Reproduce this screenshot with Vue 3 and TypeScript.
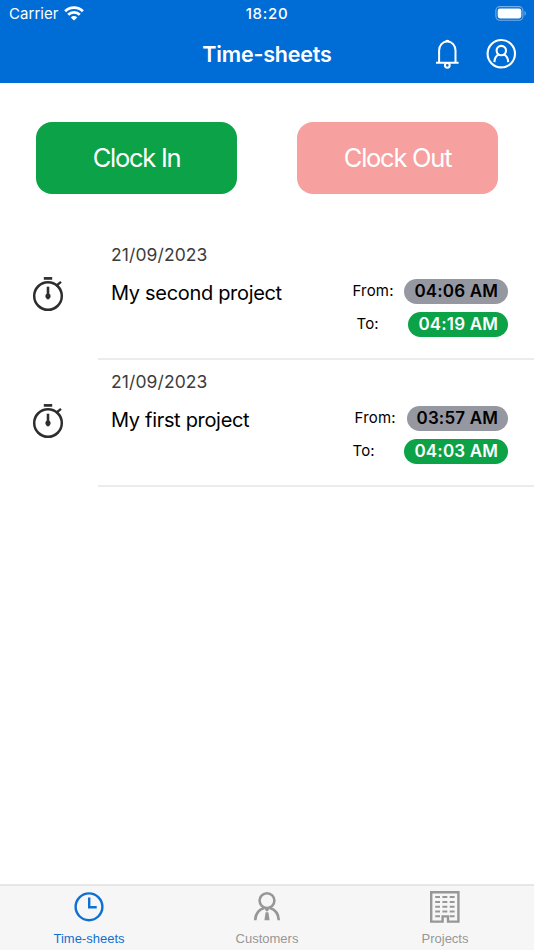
<script setup lang="ts">
interface Entry {
  id: number
  date: string
  project: string
  from: string
  to: string
}

const entries: Entry[] = [
  { id: 2, date: '21/09/2023', project: 'My second project', from: '04:06 AM', to: '04:19 AM' },
  { id: 1, date: '21/09/2023', project: 'My first project', from: '03:57 AM', to: '04:03 AM' },
]

const windowRows = [7.1, 11.9, 16.7, 21.5]
</script>

<template>
  <div class="screen">
    <header class="header">
      <div class="status">
        <div class="carrier">
          <span class="carrier-name">Carrier</span>
          <svg class="wifi" width="20" height="15" viewBox="0 0 20 15">
            <g fill="none" stroke="#fff" stroke-width="2.7">
              <path d="M1.1 5.3a12.6 12.6 0 0 1 17.8 0" />
              <path d="M4.2 8.7a8.2 8.2 0 0 1 11.6 0" />
            </g>
            <path d="M10 14.6 6.8 11.4a4.5 4.5 0 0 1 6.4 0Z" fill="#fff" />
          </svg>
        </div>
        <span class="time">18:20</span>
        <svg class="battery" width="32" height="15" viewBox="0 0 32 15">
          <rect x=".9" y=".6" width="27" height="13.6" rx="4" fill="none" stroke="#73aee9" stroke-width="1.1" />
          <rect x="2.7" y="2.4" width="23.6" height="10" rx="2.3" fill="#fff" />
          <path d="M29.5 5v4.8c1.8-.7 1.8-4.1 0-4.8Z" fill="#73aee9" />
        </svg>
      </div>
      <div class="navbar">
        <h1 class="title">Time-sheets</h1>
        <div class="actions">
          <svg width="24" height="32" viewBox="0 0 24 32" fill="none" stroke="#fff" stroke-width="2">
            <path d="M0 24.7h22.6M3.1 24.5V12.6C3.1 7.2 6.6 3.6 11.3 3.6s8.2 3.6 8.2 9V24.5" />
            <path d="M8.6 3.8a2.8 2.8 0 0 1 5.4 0Z" fill="#fff" stroke="none" />
            <circle cx="11.3" cy="27.3" r="2.4" />
          </svg>
          <svg width="32" height="32" viewBox="0 0 32 32" fill="none" stroke="#fff" stroke-width="2.1">
            <circle cx="16.3" cy="15.7" r="13.7" />
            <circle cx="16.3" cy="12.6" r="4.7" />
            <path d="M9.4 24.1c.1-4.1 1.9-6.7 4.7-8M23.2 24.1c-.1-4.1-1.9-6.7-4.7-8" />
          </svg>
        </div>
      </div>
    </header>

    <main class="content">
      <div class="buttons">
        <button class="clock-button clock-in"><span>Clock In</span></button>
        <button class="clock-button clock-out"><span>Clock Out</span></button>
      </div>

      <div v-for="entry in entries" :key="entry.id" class="entry">
        <svg class="stopwatch" width="34" height="38" viewBox="0 0 34 38" fill="none" stroke="#2e2e2e">
          <circle cx="16" cy="22" r="13.8" stroke-width="2.5" />
          <path d="M11.8 4.4h8.4" stroke-width="2.7" />
          <path d="m24 12 5-4.2" stroke-width="2.3" />
          <path d="M16 12.7v12.6" stroke-width="2.6" />
          <circle cx="16" cy="22" r="2.6" fill="#2e2e2e" stroke="none" />
        </svg>
        <div class="entry-body">
          <div class="summary">
            <div class="date">{{ entry.date }}</div>
            <div class="project">{{ entry.project }}</div>
          </div>
          <div class="times">
            <div class="time-row">
              <span class="label">From:</span>
              <span class="pill pill-from">{{ entry.from }}</span>
            </div>
            <div class="time-row">
              <span class="label">To:</span>
              <span class="pill pill-to">{{ entry.to }}</span>
            </div>
          </div>
        </div>
      </div>
    </main>

    <nav class="tabs">
      <div class="tab active">
        <svg width="34" height="34" viewBox="0 0 34 34" fill="none" stroke="currentColor" stroke-width="2.4">
          <circle cx="17" cy="16.8" r="13.4" />
          <path d="M17.2 7.5v9.7h7.5" />
        </svg>
        <span>Time-sheets</span>
      </div>
      <div class="tab">
        <svg width="34" height="34" viewBox="0 0 34 34" fill="none" stroke="currentColor" stroke-width="2.6">
          <circle cx="17" cy="10.6" r="7.4" />
          <path d="M5.2 30.2c.2-6 3.6-10.6 8.9-12.3M28.8 30.2c-.2-6-3.6-10.6-8.9-12.3" />
          <path d="M14.2 17.8h5.6L18 21.2h-2ZM15.6 22.3h2.8l1.2 7.9h-5.2Z" fill="currentColor" stroke="none" />
        </svg>
        <span>Customers</span>
      </div>
      <div class="tab">
        <svg width="34" height="34" viewBox="0 0 34 34" fill="none" stroke="currentColor" stroke-width="2.4">
          <path d="M3.2 2.2h27.2v29.4H20v-5.2h-5.4v5.2H3.2Z" />
          <path
            v-for="y in windowRows"
            :key="y"
            :d="`M7.2 ${y}h4.8m2.4 0h4.9m2.4 0h4.9`"
            stroke-width="2"
          />
          <path d="M7.2 26.3h4.8m9.7 0h4.9" stroke-width="2" />
        </svg>
        <span>Projects</span>
      </div>
    </nav>
  </div>
</template>

<style>
body {
  margin: 0;
  background: #fff;
}
</style>

<style scoped>
.screen {
  width: 534px;
  height: 950px;
  display: flex;
  flex-direction: column;
  overflow: hidden;
  background: #fff;
  font-family: Inter, "Liberation Sans", sans-serif;
  color: #000;
}
.header {
  height: 83px;
  flex: none;
  background: #006cd6;
  color: #fff;
}
.status {
  height: 27px;
  display: grid;
  grid-template-columns: 1fr auto 1fr;
  align-items: center;
  padding: 0 7px 0 9px;
  font-size: 15px;
}
.carrier {
  display: flex;
  align-items: center;
  gap: 5px;
}
.carrier-name {
  letter-spacing: 0.05px;
}
.time {
  margin-right: 2px;
  font-weight: 500;
  letter-spacing: 0.7px;
}
.battery {
  justify-self: end;
}
.navbar {
  height: 54px;
  display: grid;
  grid-template-columns: 1fr auto 1fr;
  align-items: center;
}
.title {
  grid-column: 2;
  margin: 0;
  font-size: 21.5px;
  font-weight: 600;
  letter-spacing: -0.2px;
}
.actions {
  justify-self: end;
  display: flex;
  gap: 25px;
  padding-right: 17px;
}
.content {
  flex: 1;
}
.buttons {
  display: flex;
  justify-content: space-between;
  padding: 39px 36px 39px;
}
.clock-button {
  width: 201px;
  height: 72px;
  padding: 0;
  border: 0;
  border-radius: 16px;
  color: #fff;
  font: 400 25.5px/72px Inter, sans-serif;
  letter-spacing: -1.25px;
}
.clock-in {
  background: #0ca247;
}
.clock-out {
  background: #f6a09f;
}
.entry {
  height: 127px;
  display: flex;
}
.stopwatch {
  flex: none;
  margin: 41px 32px 0 32px;
}
.entry-body {
  flex: 1;
  display: flex;
  justify-content: space-between;
  padding: 0 26px 0 13px;
  border-bottom: 2px solid #ececec;
  box-sizing: border-box;
}
.date {
  margin-top: 11px;
  font-size: 17.5px;
  line-height: 22px;
  letter-spacing: 0.1px;
  color: #3c3c3c;
}
.project {
  margin-top: 14px;
  font-size: 20px;
  line-height: 26px;
  letter-spacing: -0.32px;
}
.times {
  display: flex;
  flex-direction: column;
  align-items: flex-end;
  gap: 8px;
  padding-top: 46px;
}
.time-row {
  display: flex;
  height: 25px;
}
.label {
  width: 52px;
  font-size: 15px;
  line-height: 24px;
  letter-spacing: 0.2px;
}
.pill {
  padding: 0 10px;
  border-radius: 13px;
  font-size: 17px;
  font-weight: 600;
  line-height: 25px;
  letter-spacing: 0.15px;
}
.pill-from {
  background: #9698a1;
}
.pill-to {
  background: #0ca247;
  color: #fff;
}
.tabs {
  height: 66px;
  flex: none;
  box-sizing: border-box;
  display: grid;
  grid-template-columns: repeat(3, 1fr);
  background: #f6f6f6;
  border-top: 2px solid #e6e6e6;
}
.tab {
  display: flex;
  flex-direction: column;
  align-items: center;
  padding-top: 4px;
  color: #979797;
  font: 13px/15px "Liberation Sans", Arial, sans-serif;
}
.tab span {
  margin-top: 7px;
}
.tab.active {
  color: #0e70d2;
}
</style>
